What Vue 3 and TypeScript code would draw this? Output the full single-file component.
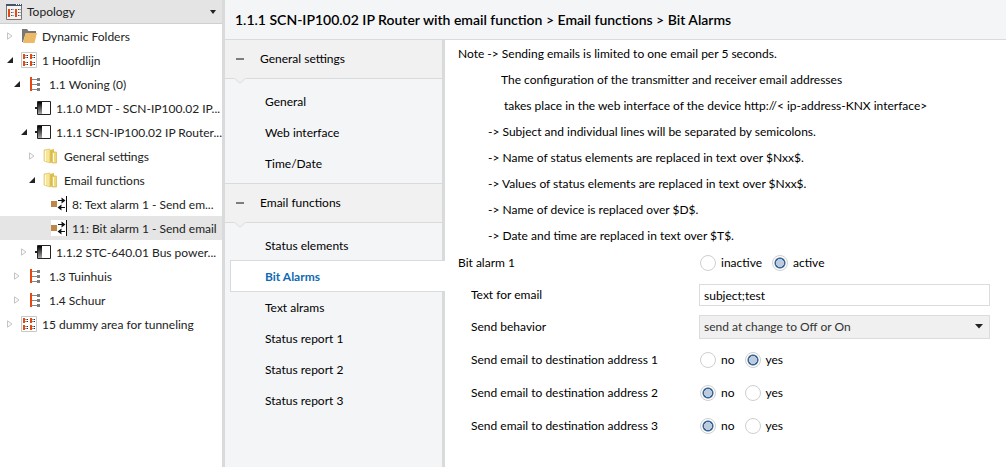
<script setup lang="ts">
import { ref } from 'vue'

type Icon = 'folder' | 'area' | 'line' | 'device' | 'channel' | 'object'
interface Node { label: string; icon: Icon; level: number; state: 'open' | 'closed' | 'leaf' }

const nodes: Node[] = [
  { label: 'Dynamic Folders', icon: 'folder', level: 0, state: 'closed' },
  { label: '1 Hoofdlijn', icon: 'area', level: 0, state: 'open' },
  { label: '1.1 Woning (0)', icon: 'line', level: 1, state: 'open' },
  { label: '1.1.0 MDT - SCN-IP100.02 IP...', icon: 'device', level: 2, state: 'leaf' },
  { label: '1.1.1 SCN-IP100.02 IP Router...', icon: 'device', level: 2, state: 'open' },
  { label: 'General settings', icon: 'channel', level: 3, state: 'closed' },
  { label: 'Email functions', icon: 'channel', level: 3, state: 'open' },
  { label: '8: Text alarm 1 - Send em...', icon: 'object', level: 4, state: 'leaf' },
  { label: '11: Bit alarm 1 - Send email', icon: 'object', level: 4, state: 'leaf' },
  { label: '1.1.2 STC-640.01 Bus power...', icon: 'device', level: 2, state: 'closed' },
  { label: '1.3 Tuinhuis', icon: 'line', level: 1, state: 'closed' },
  { label: '1.4 Schuur', icon: 'line', level: 1, state: 'closed' },
  { label: '15 dummy area for tunneling', icon: 'area', level: 0, state: 'closed' },
]
const selected = ref('11: Bit alarm 1 - Send email')

const sections = [
  { title: 'General settings', items: ['General', 'Web interface', 'Time/Date'] },
  {
    title: 'Email functions',
    items: ['Status elements', 'Bit Alarms', 'Text alrams', 'Status report 1', 'Status report 2', 'Status report 3'],
  },
]
const page = ref('Bit Alarms')

const notes = [
  { text: 'Note -> Sending emails is limited to one email per 5 seconds.', kind: 'lead' },
  { text: 'The configuration of the transmitter and receiver email addresses', kind: 'more' },
  { text: 'takes place in the web interface of the device http://< ip-address-KNX interface>', kind: 'more deep' },
  { text: '-> Subject and individual lines will be separated by semicolons.', kind: 'point' },
  { text: '-> Name of status elements are replaced in text over $Nxx$.', kind: 'point' },
  { text: '-> Values of status elements are replaced in text over $Nxx$.', kind: 'point' },
  { text: '-> Name of device is replaced over $D$.', kind: 'point' },
  { text: '-> Date and time are replaced in text over $T$.', kind: 'point' },
]

const alarm = ref('active')
const emailText = ref('subject;test')
const behavior = ref('send at change to Off or On')
const destinations = ref([
  { label: 'Send email to destination address 1', value: 'yes' },
  { label: 'Send email to destination address 2', value: 'no' },
  { label: 'Send email to destination address 3', value: 'no' },
])
</script>

<template>
  <div class="app">
    <aside class="topology">
      <button class="panel-title" type="button">
        <svg class="icon" viewBox="0 0 16 16" aria-hidden="true">
          <path d="M.5 1v14.500h15V1" fill="#f4f4f4" stroke="#777" />
          <path d="M0 0h16v2H0z" fill="#44546a" />
          <path d="M10 0h1v1h-1zM12 0h1v1h-1zM14 0h1v1h-1z" fill="#fff" />
          <path d="M2 5h2v8H2zM9 5h2v8H9z" fill="#e8480f" />
          <path d="M5 5.500h3M5 8.500h3M5 11.500h3M12 5.500h3M12 8.500h3M12 11.500h3" stroke="#555" stroke-dasharray="1 .5" />
        </svg>
        <span class="panel-name">Topology</span>
        <svg class="drop" viewBox="0 0 6 4" aria-hidden="true"><path d="M0 0h6L3 4z" fill="#222" /></svg>
      </button>
      <ul class="tree">
        <li v-for="n in nodes" :key="n.label">
          <button
            type="button"
            :class="['node', 'level-' + n.level, { selected: n.label === selected }]"
            @click="selected = n.label"
          >
            <svg class="caret" viewBox="0 0 8 8" aria-hidden="true">
              <path v-if="n.state === 'open'" d="M7 1v6H1z" fill="#222" />
              <path v-else-if="n.state === 'closed'" d="M1.500.8v6.400L6 4z" fill="#fafafa" stroke="#c4c4c4" />
            </svg>
            <svg class="icon" viewBox="0 0 16 16" aria-hidden="true">
              <g v-if="n.icon === 'folder'">
                <path d="M1 14V1h5l1.500 2H15V6H4.500L2 14z" fill="#777" />
                <path d="M4.500 5H16L13.500 15H2z" fill="#ecb967" />
              </g>
              <g v-else-if="n.icon === 'area'">
                <path d="M.5.5h15v15H.5z" fill="#fff" stroke="#c8c8c8" />
                <path d="M2 2h2v5H2zM9 2h2v5H9zM2 9h2v5H2zM9 9h2v5H9z" fill="#e8480f" />
                <path d="M4.500 3.500h3M4.500 5.500h3M11.500 3.500h3M11.500 5.500h3M4.500 10.500h3M4.500 12.500h3M11.500 10.500h3M11.500 12.500h3" stroke="#333" stroke-dasharray="1 .5" />
              </g>
              <g v-else-if="n.icon === 'line'">
                <path d="M4 3.500h6M4 8.500h6M4 13.500h6" stroke="#888" />
                <path d="M9 2h3v3H9zM9 7h3v3H9zM9 12h3v3H9z" fill="#7d7d7d" />
                <path d="M2 1h2v14H2z" fill="#e8480f" />
              </g>
              <g v-else-if="n.icon === 'device'">
                <defs>
                  <linearGradient id="shade" x1="0" y1="0" x2="0" y2="1">
                    <stop offset="0" stop-color="#000" /><stop offset="1" stop-color="#aaa" />
                  </linearGradient>
                </defs>
                <path d="M2.500 1.500h13v13h-13z" fill="#fff" stroke="#222" />
                <path d="M3 2h4v12H3z" fill="url(#shade)" />
                <path d="M0 7h2v2H0z" fill="#222" />
              </g>
              <g v-else-if="n.icon === 'channel'">
                <path d="M1 2l6-1v14l-6-2z" fill="#f6e59a" stroke="#d9bd55" stroke-width=".6" />
                <path d="M7 2l4-1v13l-4 1z" fill="#dfc04f" />
                <path d="M9 4h4.500v11H9z" fill="#f0d878" stroke="#cfae45" stroke-width=".6" />
                <path d="M2.500 3v10M10.500 5v9" stroke="#fffbe0" />
              </g>
              <g v-else>
                <path d="M0 0h16v16H0z" fill="#fff" />
                <path d="M0 5h6v6H0z" fill="#bd8748" />
                <path d="M15.500 0v16" stroke="#111" />
                <path d="M7 4.500h6M8 11.500h6" stroke="#111" />
                <path d="M10.500 1.500l4 3-4 3V5.500l1-1-1-1zM10.500 8.500l-4 3 4 3v-2l-1-1 1-1z" fill="#111" />
              </g>
            </svg>
            <span class="node-label">{{ n.label }}</span>
          </button>
        </li>
      </ul>
    </aside>

    <main class="main">
      <h1 class="crumbs">1.1.1 SCN-IP100.02 IP Router with email function &gt; Email functions &gt; Bit Alarms</h1>
      <div class="body">
        <nav class="nav">
          <section v-for="s in sections" :key="s.title" class="group">
            <button class="group-head" type="button">
              <span class="minus"></span>{{ s.title }}
              <svg class="notch" viewBox="0 0 12 6" aria-hidden="true">
                <path d="M0 0h12L6 5z" fill="#f1f1f1" /><path d="M.5.5L6 5 11.500.5" fill="none" stroke="#dcdcdc" />
              </svg>
            </button>
            <div class="items">
              <a
                v-for="item in s.items"
                :key="item"
                href="#"
                :class="['item', { current: item === page }]"
                @click.prevent="page = item"
              >{{ item }}</a>
            </div>
          </section>
        </nav>

        <form class="form" @submit.prevent>
          <div class="notes">
            <p v-for="n in notes" :key="n.text" :class="n.kind">{{ n.text }}</p>
          </div>
          <div class="row first" role="radiogroup" aria-labelledby="alarm-label">
            <span id="alarm-label">Bit alarm 1</span>
            <div class="choices">
              <label v-for="v in ['inactive', 'active']" :key="v">
                <input v-model="alarm" type="radio" name="alarm" :value="v" />{{ v }}
              </label>
            </div>
          </div>
          <div class="row sub field">
            <label for="email-text">Text for email</label>
            <input id="email-text" v-model="emailText" class="text" type="text" />
          </div>
          <div class="row sub field">
            <label for="behavior">Send behavior</label>
            <div class="select">
              <select id="behavior" v-model="behavior">
                <option>send at change to Off or On</option>
                <option>send at change to Off</option>
                <option>send at change to On</option>
              </select>
              <svg class="select-arrow" viewBox="0 0 8 5" aria-hidden="true"><path d="M0 0h8L4 4.500z" fill="#222" /></svg>
            </div>
          </div>
          <div
            v-for="(d, i) in destinations"
            :key="d.label"
            class="row sub"
            role="radiogroup"
            :aria-labelledby="'dest-' + i"
          >
            <span :id="'dest-' + i">{{ d.label }}</span>
            <div class="choices">
              <label v-for="v in ['no', 'yes']" :key="v">
                <input v-model="d.value" type="radio" :name="'dest-' + i" :value="v" />{{ v }}
              </label>
            </div>
          </div>
        </form>
      </div>
    </main>
  </div>
</template>

<style>
body { margin: 0; background: #fff; }
</style>

<style scoped>
* { box-sizing: border-box; }
.app {
  display: flex;
  min-height: 100vh;
  font: 12px/16px Lato, "Open Sans", "Noto Sans", sans-serif;
  color: #000;
}
button, input, select { font: inherit; color: inherit; }
button { border: 0; background: none; padding: 0; text-align: left; }

.topology { flex: 0 0 225px; min-width: 0; overflow: hidden; border-right: 3px solid #d9dadb; color: #222; }
.panel-title {
  display: flex; align-items: center; width: 100%; height: 24px; padding: 0 6px;
  background: #e4e4e4; border-bottom: 1px solid #cfcfcf;
}
.panel-name { flex: 1; margin-left: 5px; }
.drop { width: 6px; height: 4px; }
.icon { flex: none; width: 16px; height: 16px; }
.tree { list-style: none; margin: 0; padding: 0; }
.node { display: flex; align-items: center; width: 100%; height: 24px; padding-left: 6px; white-space: nowrap; }
.node.selected { background: #e5e5e5; }
.level-1 { padding-left: 13px; }
.level-2 { padding-left: 20px; }
.level-3 { padding-left: 28px; }
.level-4 { padding-left: 36px; }
.caret { flex: none; width: 8px; height: 8px; margin-right: 7px; }
.node-label { margin-left: 5px; padding-top: 1px; }

.main { flex: 1; min-width: 0; display: flex; flex-direction: column; }
.crumbs {
  margin: 0; height: 40px; padding-left: 10px; font-size: 14px; font-weight: 600; line-height: 39px;
  background: #f4f5f7; border-bottom: 1px solid #d9dadb; white-space: nowrap;
}
.body { flex: 1; display: flex; }
.nav { flex: 0 0 220px; background: #f4f5f7; border-right: 3px solid #d9dadb; }
.group + .group { border-top: 1px solid #d9dadb; }
.group-head {
  position: relative; display: flex; align-items: center; width: 100%; height: 39px; padding-left: 11px;
  background: #f1f1f1; border-bottom: 1px solid #d9dadb;
}
.minus { width: 8px; height: 2px; margin-right: 16px; background: #7d7d7d; }
.notch { position: absolute; left: 9px; top: 38px; width: 12px; height: 6px; }
.items { padding: 7px 0 4px; }
.item {
  display: block; height: 31px; margin-left: 5px; padding-left: 35px; line-height: 31px;
  color: #000; text-decoration: none;
}
.item.current {
  position: relative; height: 32px; margin-top: -1px; margin-right: -3px; padding-left: 34px; line-height: 31px;
  background: #fff; border: 1px solid #d9dadb; border-right: 0; color: #0f6ab4; font-weight: 700;
}

.form { flex: 1; min-width: 0; padding: 1px 16px 0 13px; background: #fff; }
.notes p { margin: 0; line-height: 26px; white-space: nowrap; }
.notes .point { padding-left: 30px; }
.notes .more { padding-left: 43px; }
.notes .deep { padding-left: 46px; }
.row { display: grid; grid-template-columns: 241px 1fr; align-items: center; height: 33px; }
.row.first { height: 28px; margin-bottom: 2px; }
.row.field { height: 32px; }
.sub > :first-child { padding-left: 13px; }
.choices { display: flex; gap: 10px; padding-left: 1px; }
.choices label { display: flex; align-items: center; }
.choices input {
  appearance: none; width: 16px; height: 16px; margin: 0 5px 0 0; border: 1px solid #cfcfcf; border-radius: 50%;
  background: #fff;
}
.choices input:checked { background: radial-gradient(circle, #bccbdd 0 4px, #3a6592 4px 5px, #fff 6px); }
.text { width: 100%; height: 22px; padding: 0 4px; border: 1px solid #dcdcdc; background: #fff; }
.select { position: relative; }
.select select {
  display: block; appearance: none; width: 100%; height: 24px; padding: 0 20px 0 4px;
  border: 1px solid #dcdcdc; border-radius: 0; background: #f0f0f0; color: #333;
}
.select-arrow { position: absolute; right: 7px; top: 9px; width: 8px; height: 5px; pointer-events: none; }
</style>
